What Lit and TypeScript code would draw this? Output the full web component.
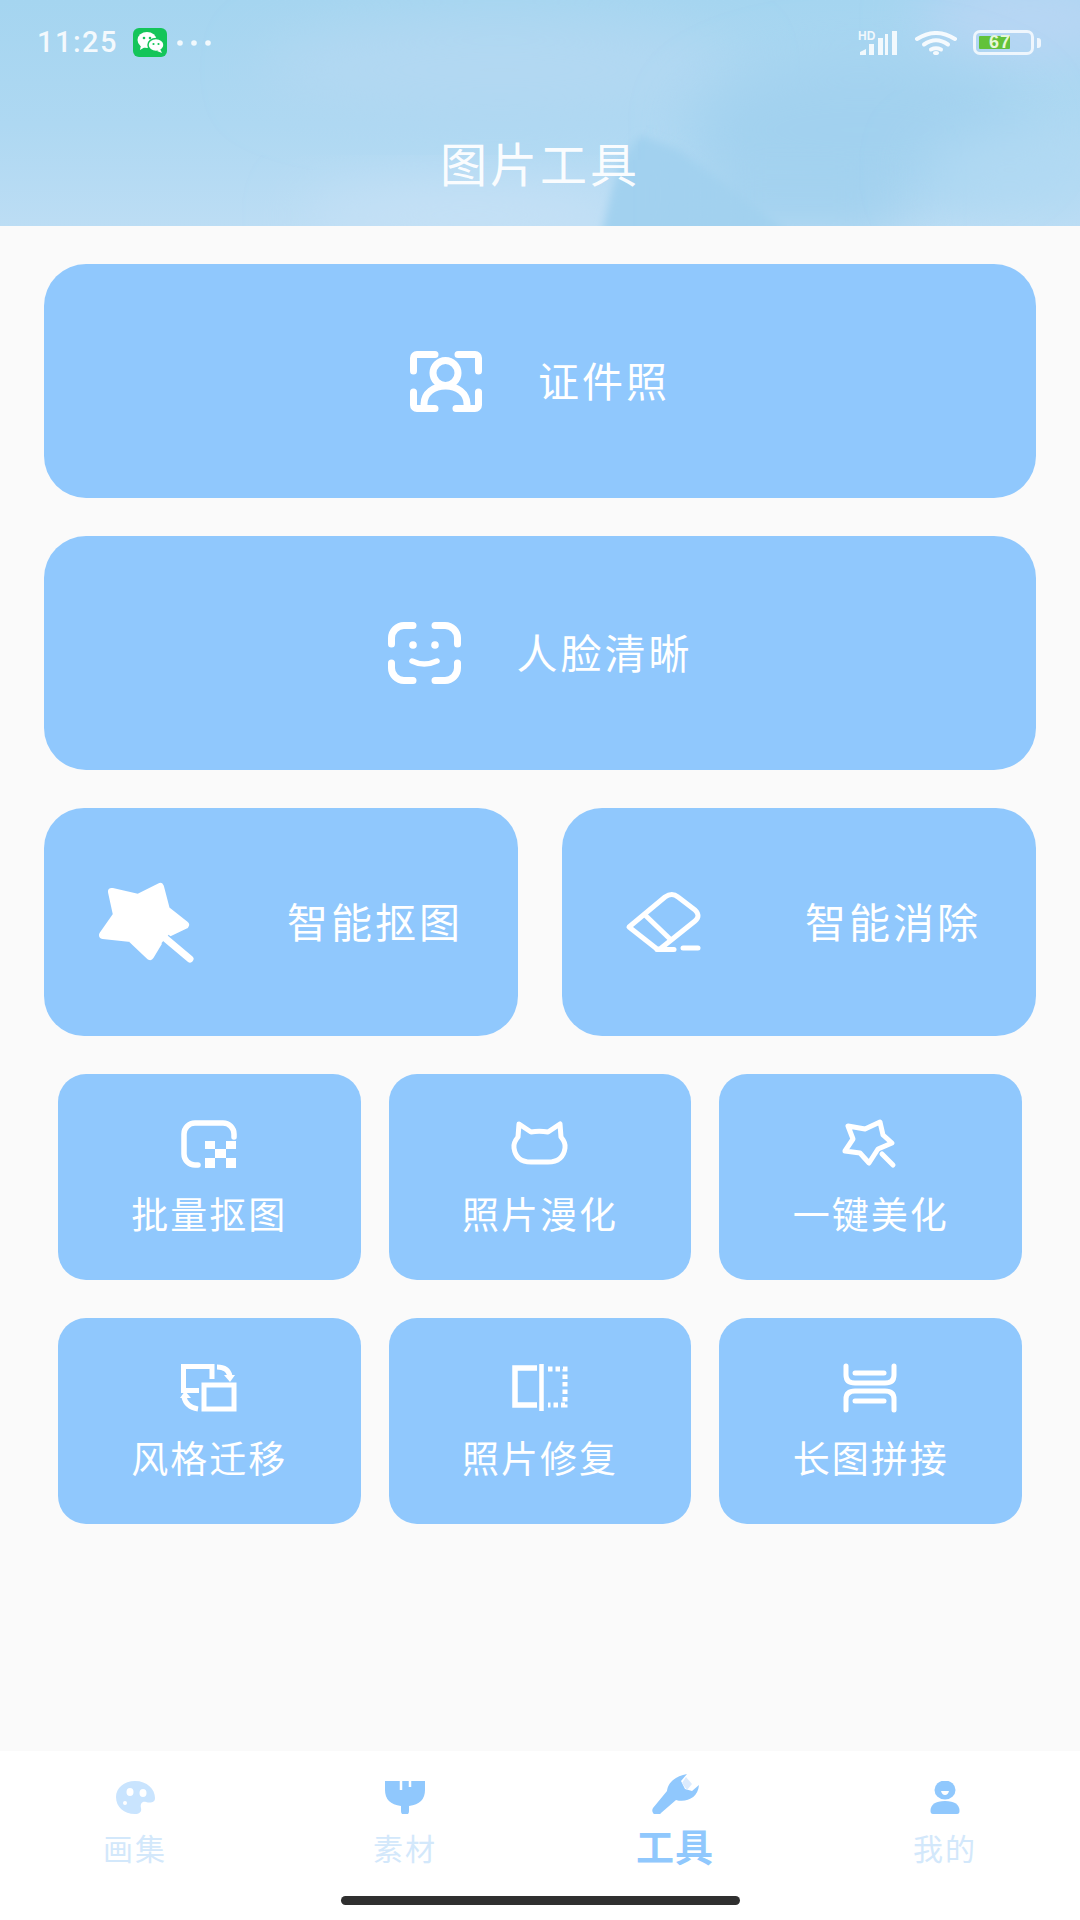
import { LitElement, html, css, svg, unsafeCSS } from 'lit';
import { customElement } from 'lit/decorators.js';

const BLUE = '#90c8fd';
const PALE = '#c9e4fe';

// feature icons, drawn in px boxes measured off the reference
const ICONS = {
  idPhoto: svg`<g fill="none" stroke="#fff" stroke-width="7" stroke-linecap="round">
    <path d="M25 3.5H7A3.5 3.5 0 0 0 3.5 7V20"/><path d="M48 3.5H65A3.5 3.5 0 0 1 68.5 7V20"/>
    <path d="M3.5 41V54A3.5 3.5 0 0 0 7 57.5H25"/><path d="M68.5 41V54A3.5 3.5 0 0 1 65 57.5H46"/>
    <circle cx="35.5" cy="22" r="12.5"/><path d="M14 53C14 42 24 35 35.5 35S57 42 57 53"/></g>`,
  face: svg`<g fill="none" stroke="#fff" stroke-width="7" stroke-linecap="round">
    <path d="M25 3.5H16A12.5 12.5 0 0 0 3.5 16V22"/><path d="M47 3.5H57A12.5 12.5 0 0 1 69.5 16V22"/>
    <path d="M3.5 41V46A12.5 12.5 0 0 0 16 58.5H25"/><path d="M69.5 41V46A12.5 12.5 0 0 1 57 58.5H47"/>
    <path d="M24 39Q36 45 49 39" stroke-width="5.5"/></g>
    <circle cx="25" cy="23" r="3.8" fill="#fff"/><circle cx="47" cy="23" r="3.8" fill="#fff"/>`,
  wand: svg`<path d="M13 10L39 16L61 5L67 28L86 43L63 54L51 74L32 56L4 53L18 33Z" fill="#fff" stroke="#fff" stroke-width="8" stroke-linejoin="round"/>
    <path d="M66 57L74 64" stroke="${BLUE}" stroke-width="11"/>
    <path d="M66 56L91 77" stroke="#fff" stroke-width="7" stroke-linecap="round"/>`,
  eraser: svg`<g fill="none" stroke="#fff" stroke-width="5" stroke-linecap="round" stroke-linejoin="round">
    <path d="M3 35L39 5Q46 0 52 5L69 18Q75 24 69 29L34 57H31Z"/><path d="M19 23L44 47"/><path d="M31 57.500H48"/></g>
    <path d="M57 56H72" stroke="#fff" stroke-width="5" stroke-linecap="round"/>`,
  batch: svg`<path d="M17 45H14A11 11 0 0 1 3 34V14A11 11 0 0 1 14 3H42A11 11 0 0 1 53 14V17" fill="none" stroke="#fff" stroke-width="5.500" stroke-linecap="round"/>
    <g fill="#fff"><rect x="24" y="21" width="10" height="8"/><rect x="45" y="21" width="10" height="8"/><rect x="34" y="29" width="11" height="9"/><rect x="24" y="38" width="10" height="10"/><rect x="45" y="38" width="10" height="10"/></g>`,
  cat: svg`<path d="M7 4L19 12Q27 10.500 36 12L48 4L49 17Q54 23 53 28Q51 42 36 42H19Q4 42 2 28Q1 23 6 17Z" fill="none" stroke="#fff" stroke-width="5" stroke-linejoin="round"/>`,
  beauty: svg`<g fill="none" stroke="#fff" stroke-width="5" stroke-linejoin="round" stroke-linecap="round"><path d="M5 6L22 9L37 2L40 15L49 23L35 29L26 43L17 33L2 31L10 19Z"/><path d="M39 34L50 45"/></g>`,
  style: svg`<g fill="none" stroke="#fff" stroke-width="5"><path d="M31 15V2.500H2.500V26.500H18"/><rect x="23" y="21" width="30" height="24"/>
    <path d="M36 3Q47 3 49 12"/><path d="M3 33Q5 43 17 45"/></g>
    <path d="M43 11H54L49 18Z" fill="#fff"/><path d="M-2 34H9L3 27Z" transform="translate(1 0)" fill="#fff"/>`,
  repair: svg`<g fill="none" stroke="#fff"><path d="M25 4H3V41H25" stroke-width="5.500"/><path d="M29.500 0V47" stroke-width="4.500"/><path d="M36 5H53V41H36" stroke-width="5" stroke-dasharray="4.500 3"/></g>`,
  stitch: svg`<g fill="none" stroke="#fff" stroke-width="5" stroke-linecap="round"><path d="M3 2V11Q3 19 12 19H42Q51 19 51 11V2"/><path d="M12 9H41"/>
    <path d="M3 46V35Q3 27 12 27H42Q51 27 51 35V46"/><path d="M12 37H41"/></g>`,
};

const BIG = [
  { label: '证件照', icon: ICONS.idPhoto, w: 72, h: 61 },
  { label: '人脸清晰', icon: ICONS.face, w: 73, h: 62 },
];
const MID = [
  { label: '智能抠图', icon: ICONS.wand, w: 95, h: 80, cls: '' },
  { label: '智能消除', icon: ICONS.eraser, w: 74, h: 60, cls: 'inset' },
];
const SMALL = [
  { label: '批量抠图', icon: ICONS.batch },
  { label: '照片漫化', icon: ICONS.cat },
  { label: '一键美化', icon: ICONS.beauty },
  { label: '风格迁移', icon: ICONS.style },
  { label: '照片修复', icon: ICONS.repair },
  { label: '长图拼接', icon: ICONS.stitch },
];

const TABS = [
  {
    label: '画集', w: 39, h: 33,
    icon: svg`<path d="M19 0C31 0 39 8 39 17C39 22 34 22 30 21C26 20 24 23 25 27C26 31 23 33 19 33C8 33 0 26 0 16C0 7 8 0 19 0Z" fill="${PALE}"/>
      <ellipse cx="14" cy="11" rx="3.500" ry="4" fill="#fff"/><ellipse cx="27" cy="12" rx="3.500" ry="4" fill="#fff"/><circle cx="9" cy="22" r="2" fill="#fff"/>`,
  },
  {
    label: '素材', w: 40, h: 33,
    icon: svg`<path d="M0 0H40V9Q40 23 24 25V30A4 4 0 0 1 16 30V25Q0 23 0 9Z" fill="${BLUE}"/><path d="M16 0V9M25 0V6" stroke="#fff" stroke-width="2.500"/>`,
  },
  {
    label: '工具', w: 47, h: 40, active: true,
    icon: svg`<path d="M35 0C24 2 16 8 15 17L1 34A4.500 4.500 0 0 0 9 39L24 26C34 29 46 24 47 11L40 17L33 15L29 7Z" fill="${BLUE}"/>
      <path d="M34 3L40 10L35 16L30 9Z" fill="#dcebfd"/>`,
  },
  {
    label: '我的', w: 32, h: 33,
    icon: svg`<ellipse cx="16" cy="9" rx="10.500" ry="9.500" fill="${BLUE}"/><path d="M12 10H20Q19 14 16 14Q13 14 12 10Z" fill="#fff"/>
      <path d="M1.500 30Q1.500 20 16 20Q30.500 20 30.500 30Q30.500 33 28 33H4Q1.500 33 1.500 30Z" fill="${BLUE}"/>`,
  },
];

@customElement('app-root')
export class AppRoot extends LitElement {
  static styles = css`
    :host {
      display: flex;
      flex-direction: column;
      width: 1080px;
      height: 1920px;
      background: #fafafa;
      font-family: "Noto Sans CJK SC", "Noto Sans", sans-serif;
      color: #fff;
      overflow: hidden;
    }

    /* === Header === */
    .header {
      position: relative;
      height: 226px;
      flex-shrink: 0;
      box-sizing: border-box;
      padding-top: 28px;
      overflow: hidden;
    }
    .sky {
      position: absolute;
      inset: 0;
      width: 100%;
      height: 100%;
    }
    .status {
      position: relative;
      display: flex;
      align-items: center;
      height: 29px;
      padding: 0 39px 0 37px;
    }
    .time {
      font-family: Roboto, "Liberation Sans", sans-serif;
      font-weight: 500;
      font-size: 29px;
      letter-spacing: 1.500px;
      width: 96px;
      color: rgba(255, 255, 255, 0.88);
      line-height: 29px;
    }
    .status svg { display: block; flex-shrink: 0; }
    .dots { margin-left: 10px; }
    .spacer { flex: 1; }
    .signal { position: relative; width: 41px; height: 24px; margin-right: 16px; }
    .signal svg { position: absolute; left: 0; top: 0; }
    .hd {
      position: absolute;
      left: 0;
      top: -1px;
      font: bold 12px/12px "Liberation Sans", sans-serif;
      color: rgba(255, 255, 255, 0.85);
    }
    .wifi { margin-right: 16px; }
    .battery {
      position: relative;
      box-sizing: border-box;
      width: 61px;
      height: 25px;
      border: 3.500px solid rgba(255, 255, 255, 0.78);
      border-radius: 7px;
      margin-right: 3px;
    }
    .battery-fill {
      position: absolute;
      left: 3px;
      top: 3px;
      bottom: 3px;
      width: 31px;
      background: #62c23a;
      border-radius: 1px;
    }
    .battery-text {
      position: absolute;
      left: 13px;
      top: -3px;
      font: bold 18px/24px "Liberation Sans", sans-serif;
      color: #e6f7d8;
      letter-spacing: 1px;
    }
    .battery-tip {
      width: 4px;
      height: 10px;
      border-radius: 0 3px 3px 0;
      background: rgba(255, 255, 255, 0.78);
    }
    .title {
      position: relative;
      margin-top: 80px;
      text-align: center;
      font-size: 47px;
      line-height: 50px;
      letter-spacing: 3px;
      color: rgba(255, 255, 255, 0.95);
    }

    /* === Feature cards === */
    .main {
      flex: 1;
      display: flex;
      flex-direction: column;
      gap: 38px;
      padding: 38px 44px 0;
    }
    .card {
      background: ${unsafeCSS(BLUE)};
      display: flex;
      align-items: center;
      box-sizing: border-box;
    }
    svg { display: block; flex-shrink: 0; }

    .big {
      height: 234px;
      border-radius: 42px;
      justify-content: center;
      gap: 56px;
      font-size: 41px;
      letter-spacing: 3px;
    }
    .big span, .mid span { margin-bottom: 5px; }
    .row2 {
      display: grid;
      grid-template-columns: 1fr 1fr;
      gap: 44px;
    }
    .mid {
      height: 228px;
      border-radius: 40px;
      justify-content: space-between;
      padding: 0 55px 0 55px;
      font-size: 41px;
      letter-spacing: 3px;
    }
    .mid.inset { padding-left: 64px; }
    .row3 {
      display: grid;
      grid-template-columns: repeat(3, 1fr);
      gap: 38px 28px;
      padding: 0 14px;
    }
    .tile {
      height: 206px;
      border-radius: 28px;
      flex-direction: column;
      padding-top: 46px;
      font-size: 37px;
      letter-spacing: 2px;
      line-height: 44px;
      gap: 23px;
    }
    .tile .glyph { width: 56px; height: 48px; }

    /* === Tab bar === */
    .tabs {
      height: 169px;
      flex-shrink: 0;
      background: #fff;
      display: flex;
      flex-direction: column;
      align-items: center;
    }
    .tab-row {
      display: grid;
      grid-template-columns: repeat(4, 1fr);
      width: 100%;
      padding-top: 22px;
    }
    .tab {
      display: flex;
      flex-direction: column;
      align-items: center;
    }
    .tab-icon {
      height: 41px;
      display: flex;
      align-items: flex-end;
    }
    .tab-label {
      margin-top: 13px;
      font-size: 30px;
      line-height: 40px;
      letter-spacing: 2px;
      color: #d3e8fb;
    }
    .tab.active .tab-label {
      margin-top: 11px;
      font-size: 38px;
      font-weight: 700;
      letter-spacing: 1px;
      color: ${unsafeCSS(BLUE)};
    }
    .home {
      margin-top: 29px;
      width: 399px;
      height: 9px;
      border-radius: 5px;
      background: #2f2f2f;
    }
  `;

  private statusBar() {
    return html`
      <div class="status">
        <span class="time">11:25</span>
        <svg width="34" height="29" viewBox="0 0 34 29">
          <rect width="34" height="29" rx="6" fill="#14c55a"/>
          <ellipse cx="14" cy="12" rx="9.500" ry="8" fill="#fff"/>
          <path d="M8 17L7 22L12 19Z" fill="#fff"/>
          <ellipse cx="23" cy="17" rx="8" ry="6.500" fill="#fff" stroke="#14c55a" stroke-width="1.500"/>
          <path d="M27 21L29 25L24 23Z" fill="#fff"/>
          <circle cx="11" cy="10" r="1.300" fill="#14c55a"/><circle cx="17" cy="10" r="1.300" fill="#14c55a"/>
          <circle cx="20.500" cy="16" r="1.100" fill="#14c55a"/><circle cx="25.500" cy="16" r="1.100" fill="#14c55a"/>
        </svg>
        <svg class="dots" width="34" height="6" viewBox="0 0 34 6">
          <circle cx="3" cy="3" r="2.800" fill="#fff" fill-opacity=".85"/>
          <circle cx="17" cy="3" r="2.800" fill="#fff" fill-opacity=".85"/>
          <circle cx="31" cy="3" r="2.800" fill="#fff" fill-opacity=".85"/>
        </svg>
        <span class="spacer"></span>
        <div class="signal">
          <span class="hd">HD</span>
          <svg width="41" height="24" viewBox="0 0 41 24">
            <g fill="#fff" fill-opacity=".85">
              <path d="M2 24V21L8 18V24Z"/><rect x="11" y="13" width="5" height="11"/><rect x="20" y="7" width="5" height="17"/><rect x="27" y="3" width="3" height="21"/><rect x="34" y="0" width="5" height="24"/>
            </g>
          </svg>
        </div>
        <svg class="wifi" width="42" height="24" viewBox="0 0 42 24">
          <g fill="none" stroke="#fff" stroke-opacity=".88" stroke-width="4" stroke-linecap="round">
            <path d="M2 8Q21 -4 40 8"/><path d="M9 13.500Q21 5 33 13.500"/><path d="M16 18.500Q21 16 26 18.500"/>
          </g>
          <ellipse cx="21" cy="22" rx="3" ry="2" fill="#fff" fill-opacity=".88"/>
        </svg>
        <div class="battery">
          <span class="battery-fill"></span>
          <span class="battery-text">67</span>
        </div>
        <span class="battery-tip"></span>
      </div>
    `;
  }

  render() {
    return html`
      <div class="header">
        <svg class="sky" viewBox="0 0 1080 226" preserveAspectRatio="none">
          <defs>
            <linearGradient id="sky" x1="0" y1="0" x2="0" y2="1">
              <stop offset="0" stop-color="#a5d5f0"/>
              <stop offset=".55" stop-color="#aed8f2"/>
              <stop offset="1" stop-color="#bcddf4"/>
            </linearGradient>
            <filter id="soft" x="-20%" y="-20%" width="140%" height="140%"><feGaussianBlur stdDeviation="4"/></filter>
            <filter id="blur" x="-50%" y="-50%" width="200%" height="200%"><feGaussianBlur stdDeviation="28"/></filter>
          </defs>
          <rect width="1080" height="226" fill="url(#sky)"/>
          <ellipse cx="500" cy="70" rx="240" ry="50" fill="#b2d8f2" filter="url(#blur)"/>
          <ellipse cx="1030" cy="20" rx="110" ry="40" fill="#b9d6f4" filter="url(#blur)"/>
          <ellipse cx="470" cy="215" rx="170" ry="30" fill="#c6e1f6" filter="url(#blur)"/>
          <ellipse cx="860" cy="130" rx="170" ry="70" fill="#a2d1ef" filter="url(#blur)"/>
          <path d="M600 240L612 190L622 160L640 135L680 150L720 180L800 240Z" fill="#a2d1ef" filter="url(#soft)"/>
          <rect x="700" y="160" width="200" height="70" fill="#a2d1ef" filter="url(#blur)"/>
          <ellipse cx="1010" cy="170" rx="90" ry="40" fill="#b0d9f3" filter="url(#blur)"/>
        </svg>
        ${this.statusBar()}
        <div class="title">图片工具</div>
      </div>

      <div class="main">
        ${BIG.map(c => html`
          <div class="card big">
            <svg width=${c.w} height=${c.h} viewBox="0 0 ${c.w} ${c.h}">${c.icon}</svg>
            <span>${c.label}</span>
          </div>
        `)}
        <div class="row2">
          ${MID.map(c => html`
            <div class="card mid ${c.cls}">
              <svg width=${c.w} height=${c.h} viewBox="0 0 ${c.w} ${c.h}" overflow="visible">${c.icon}</svg>
              <span>${c.label}</span>
            </div>
          `)}
        </div>
        <div class="row3">
          ${SMALL.map(c => html`
            <div class="card tile">
              <svg class="glyph" viewBox="0 0 56 48" overflow="visible">${c.icon}</svg>
              <span>${c.label}</span>
            </div>
          `)}
        </div>
      </div>

      <div class="tabs">
        <div class="tab-row">
          ${TABS.map(t => html`
            <div class="tab ${t.active ? 'active' : ''}">
              <div class="tab-icon">
                <svg width=${t.w} height=${t.h} viewBox="0 0 ${t.w} ${t.h}">${t.icon}</svg>
              </div>
              <span class="tab-label">${t.label}</span>
            </div>
          `)}
        </div>
        <div class="home"></div>
      </div>
    `;
  }
}
